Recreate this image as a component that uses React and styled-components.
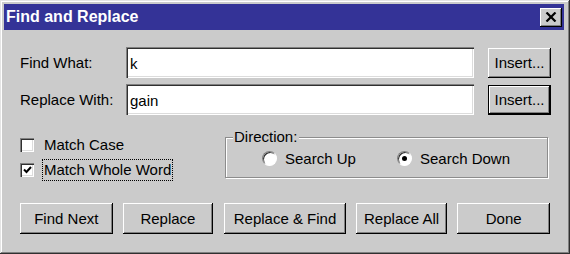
import React, { useState } from 'react';
import styled, { createGlobalStyle } from 'styled-components';

const GlobalStyle = createGlobalStyle`
  html, body {
    margin: 0;
    padding: 0;
    background: #cbcbcb;
  }
  * {
    box-sizing: border-box;
  }
`;

const Window = styled.div`
  width: 570px;
  height: 254px;
  padding: 4px 6px 4px 4px;
  background: #cbcbcb;
  font-family: "Liberation Sans", Arial, sans-serif;
  font-size: 15px;
  color: #000;
  box-shadow: inset -1px -1px #303030, inset 1px 1px #e4e4e4, inset -2px -2px #808080, inset 2px 2px #ffffff;
  display: flex;
  flex-direction: column;
`;

const TitleBar = styled.div`
  height: 26px;
  background: #343397;
  display: flex;
  align-items: center;
  justify-content: space-between;
  padding: 0 2px 0 2px;
`;

const Title = styled.div`
  color: #fff;
  font-weight: bold;
  font-size: 16px;
`;

const CloseButton = styled.button`
  width: 22px;
  height: 19px;
  padding: 0;
  border: none;
  background: #cbcbcb;
  box-shadow: inset -1px -1px #000, inset 1px 1px #fff, inset -2px -2px #808080;
  display: flex;
  align-items: center;
  justify-content: center;
`;

const Body = styled.div`
  flex: 1;
  padding: 17px 14px 0 16px;
  display: flex;
  flex-direction: column;
`;

const FieldGrid = styled.div`
  display: grid;
  grid-template-columns: 92px 348px 63px;
  column-gap: 14px;
  row-gap: 6px;
  grid-auto-rows: 31px;
  align-items: center;
`;

const Label = styled.label`
  white-space: nowrap;
`;

const TextBox = styled.input`
  height: 31px;
  width: 100%;
  border: none;
  outline: none;
  background: #fff;
  font-family: inherit;
  font-size: 15px;
  color: #000;
  padding: 2px 4px 0 4px;
  box-shadow: inset 1px 1px #808080, inset 2px 2px #303030, inset -1px -1px #fff, inset -2px -2px #dcdcdc;
`;

const Button = styled.button`
  height: ${p => p.$h || 31}px;
  width: ${p => p.$w}px;
  border: none;
  padding: 0;
  background: #cbcbcb;
  font-family: "Liberation Sans", Arial, sans-serif;
  font-size: 15px;
  color: #000;
  box-shadow: ${p => p.$default
    ? 'inset 0 0 0 1px #000, inset -2px -2px #000, inset 2px 2px #fff, inset -3px -3px #808080'
    : 'inset -1px -1px #000, inset 1px 1px #fff, inset -2px -2px #808080'};
`;

const Options = styled.div`
  display: flex;
  margin-top: 15px;
  height: 52px;
`;

const CheckColumn = styled.div`
  width: 205px;
  display: flex;
  flex-direction: column;
  padding-top: 5px;
  gap: 5px;
`;

const CheckRow = styled.div`
  display: flex;
  align-items: center;
  gap: 9px;
`;

const CheckBox = styled.span`
  width: 14px;
  height: 14px;
  flex: none;
  background: #fff;
  box-shadow: inset 1px 1px #808080, inset 2px 2px #303030, inset -1px -1px #fff, inset -2px -2px #dcdcdc;
  display: flex;
  align-items: center;
  justify-content: center;
`;

const CheckText = styled.span`
  padding: 0 1px;
  line-height: 20px;
  outline: ${p => (p.$focused ? '1px dotted #000' : 'none')};
`;

const GroupBox = styled.fieldset`
  width: 323px;
  height: 48px;
  margin: 0;
  padding: 6px 0 0 0;
  border: 1px solid #8c8c8c;
  box-shadow: inset 1px 1px #fff, 1px 1px #fff;
  display: flex;
  align-items: flex-start;
`;

const Legend = styled.legend`
  margin-left: 7px;
  padding: 0 2px 0 1px;
  background: #cbcbcb;
  line-height: 14px;
`;

const RadioRow = styled.div`
  display: flex;
  align-items: center;
  gap: 8px;
  width: ${p => p.$w}px;
  padding-left: ${p => p.$pl}px;
`;

const Radio = styled.span`
  width: 15px;
  height: 15px;
  flex: none;
  border-radius: 50%;
  background: #fff;
  border: 1px solid #808080;
  border-right-color: #fff;
  border-bottom-color: #fff;
  box-shadow: inset 1px 1px #303030;
  display: flex;
  align-items: center;
  justify-content: center;
`;

const Dot = styled.span`
  width: 5px;
  height: 5px;
  border-radius: 50%;
  background: #000;
`;

const ButtonRow = styled.div`
  display: flex;
  margin-top: 21px;
`;

const Spacer = styled.span`
  width: ${p => p.$w}px;
  flex: none;
`;

const CheckMark = () => (
  <svg width="9" height="8" viewBox="0 0 9 8">
    <path d="M1 3.5 L3.5 6 L8 1" stroke="#000" strokeWidth="2" fill="none" />
  </svg>
);

const CloseIcon = () => (
  <svg width="12" height="10" viewBox="0 0 12 10">
    <path d="M1.5 0.5 L10.5 9.5 M10.5 0.5 L1.5 9.5" stroke="#000" strokeWidth="2.2" fill="none" />
  </svg>
);

export default function App() {
  const [findText, setFindText] = useState('k');
  const [replaceText, setReplaceText] = useState('gain');

  return (
    <>
      <GlobalStyle />
      <Window>
        <TitleBar>
          <Title>Find and Replace</Title>
          <CloseButton aria-label="Close"><CloseIcon /></CloseButton>
        </TitleBar>
        <Body>
          <FieldGrid>
            <Label>Find What:</Label>
            <TextBox value={findText} onChange={e => setFindText(e.target.value)} />
            <Button $w={63} $h={30}>Insert...</Button>
            <Label>Replace With:</Label>
            <TextBox value={replaceText} onChange={e => setReplaceText(e.target.value)} />
            <Button $w={63} $h={30} $default>Insert...</Button>
          </FieldGrid>

          <Options>
            <CheckColumn>
              <CheckRow>
                <CheckBox />
                <CheckText>Match Case</CheckText>
              </CheckRow>
              <CheckRow>
                <CheckBox><CheckMark /></CheckBox>
                <CheckText $focused>Match Whole Word</CheckText>
              </CheckRow>
            </CheckColumn>
            <GroupBox>
              <Legend>Direction:</Legend>
              <RadioRow $w={171} $pl={36}>
                <Radio />
                <span>Search Up</span>
              </RadioRow>
              <RadioRow $w={150} $pl={0}>
                <Radio><Dot /></Radio>
                <span>Search Down</span>
              </RadioRow>
            </GroupBox>
          </Options>

          <ButtonRow>
            <Button $w={93}>Find Next</Button>
            <Spacer $w={10} />
            <Button $w={91}>Replace</Button>
            <Spacer $w={11} />
            <Button $w={122}>Replace &amp; Find</Button>
            <Spacer $w={10} />
            <Button $w={92}>Replace All</Button>
            <Spacer $w={10} />
            <Button $w={93}>Done</Button>
          </ButtonRow>
        </Body>
      </Window>
    </>
  );
}
